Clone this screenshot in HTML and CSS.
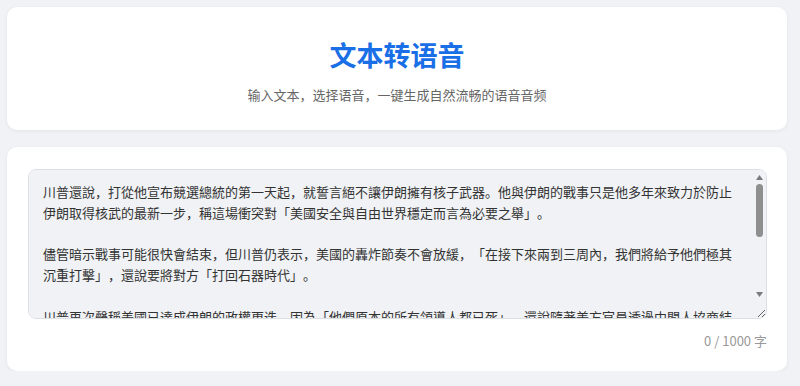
FILE: index.html
```html
<!DOCTYPE html>
<html lang="zh-CN">
<head>
    <meta charset="UTF-8">
    <meta name="viewport" content="width=device-width, initial-scale=1.0">
    <title>文本转语音</title>
    <link rel="stylesheet" href="styles.css">
</head>
<body>
    <div class="container">
        <header class="card header">
            <h1>文本转语音</h1>
            <p class="subtitle">输入文本，选择语音，一键生成自然流畅的语音音频</p>
        </header>

        <div class="card editor">
            <div class="field">
                <textarea class="text-input">川普還說，打從他宣布競選總統的第一天起，就誓言絕不讓伊朗擁有核子武器。他與伊朗的戰事只是他多年來致力於防止伊朗取得核武的最新一步，稱這場衝突對「美國安全與自由世界穩定而言為必要之舉」。

儘管暗示戰事可能很快會結束，但川普仍表示，美國的轟炸節奏不會放緩，「在接下來兩到三周內，我們將給予他們極其沉重打擊」，還說要將對方「打回石器時代」。

川普再次聲稱美國已達成伊朗的政權更迭，因為「他們原本的所有領導人都已死」，還說隨著美方官員透過中間人協商結束戰事，伊朗新領導層「比以前更理性」。

他同時表示，美國不會派遣地面部隊進入伊朗，但會持續監控當地局勢，確保核設施不會重建，並呼籲盟友共同施壓。

白宮發言人稍後補充，總統將於本週稍晚與國家安全團隊開會，評估下一階段的行動方案。</textarea>
                <!-- scrollbar drawn by hand, the headless browser hides the real one -->
                <div class="scrollbar">
                    <svg class="arrow" width="7" height="5" viewBox="0 0 7 5"><path d="M3.5 0 7 5H0z" fill="#7a7a7a"/></svg>
                    <div class="thumb"></div>
                    <svg class="arrow down" width="7" height="5" viewBox="0 0 7 5"><path d="M0 0h7L3.5 5z" fill="#7a7a7a"/></svg>
                </div>
            </div>
            <div class="counter">0 / 1000 字</div>
        </div>
    </div>
</body>
</html>
```

FILE: styles.css
```css
* {
    box-sizing: border-box;
}

body {
    margin: 0;
    background: #f0f2f5;
    font-family: "Noto Sans CJK SC", "Noto Sans", sans-serif;
    color: #333;
}

.container {
    width: 780px;
    margin-left: 7px;
    padding-top: 7px;
    display: flex;
    flex-direction: column;
    gap: 17px;
}

.card {
    background: #fff;
    border-radius: 10px;
    box-shadow: 0 1px 4px rgba(0, 0, 0, 0.06);
}

.header {
    height: 123px;
    padding-top: 31px;
    text-align: center;
}

h1 {
    margin: 0;
    font-size: 27px;
    line-height: 34px;
    font-weight: 700;
    color: #1a6fe6;
}

.subtitle {
    margin: 13px 0 0;
    font-size: 13px;
    line-height: 20px;
    color: #666;
}

.editor {
    padding: 22px 20px 21px 21px;
}

.field {
    position: relative;
}

.text-input {
    display: block;
    width: 100%;
    height: 150px;
    padding: 12px 29px 11px 14px;
    border: 1px solid #dcdfe4;
    border-radius: 8px;
    background: #f0f2f5;
    font-family: "Noto Sans CJK TC", "Noto Sans", sans-serif;
    font-size: 13px;
    line-height: 1.6;
    color: #333;
    outline: none;
    text-spacing-trim: space-all;
}

.scrollbar {
    position: absolute;
    top: 1px;
    right: 1px;
    bottom: 17px;
    width: 14px;
    display: flex;
    flex-direction: column;
    align-items: center;
    border-top-right-radius: 7px;
    background: #f0f2f5;
    pointer-events: none;
}

.arrow {
    margin-top: 5px;
}

.arrow.down {
    margin-top: auto;
    margin-bottom: 5px;
}

.thumb {
    width: 7px;
    height: 53px;
    margin-top: 4px;
    border-radius: 4px;
    background: #8f8f8f;
}

.counter {
    margin-top: 13px;
    text-align: right;
    font-size: 13px;
    line-height: 18px;
    color: #999;
}
```
